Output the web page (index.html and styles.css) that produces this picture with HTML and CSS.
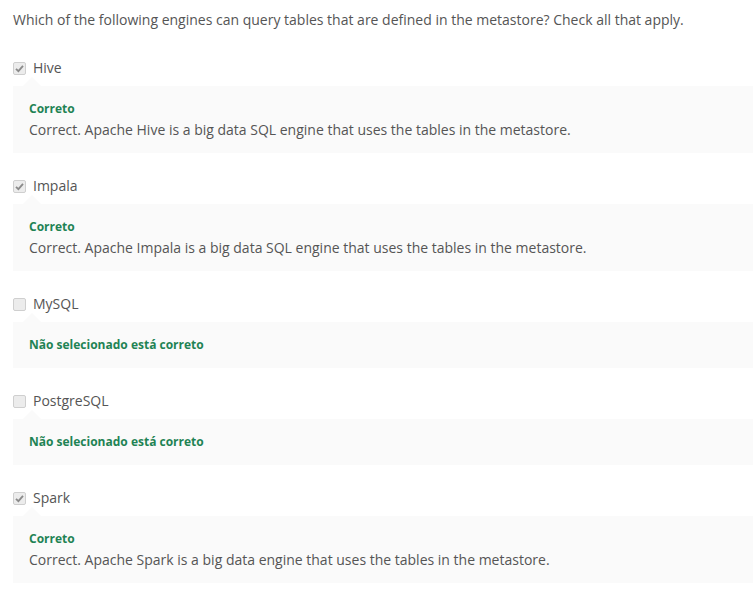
FILE: index.html
```html
<!DOCTYPE html>
<html>
<head>
<meta charset="utf-8">
<link rel="stylesheet" href="styles.css">
</head>
<body>
<div class="quiz">
  <p class="question">Which of the following engines can query tables that are defined in the metastore? Check all that apply.</p>
  <div class="options">
    <div class="option">
      <div class="choice"><span class="box checked"><svg viewBox="0 0 13 13" width="13" height="13"><path d="M3 6.8 L5.4 9.2 L10 3.8" fill="none" stroke="#8a8a8a" stroke-width="1.8"/></svg></span><span class="label">Hive</span></div>
      <div class="feedback">
        <div class="verdict">Correto</div>
        <div class="explain">Correct. Apache Hive is a big data SQL engine that uses the tables in the metastore.</div>
      </div>
    </div>
    <div class="option">
      <div class="choice"><span class="box checked"><svg viewBox="0 0 13 13" width="13" height="13"><path d="M3 6.8 L5.4 9.2 L10 3.8" fill="none" stroke="#8a8a8a" stroke-width="1.8"/></svg></span><span class="label">Impala</span></div>
      <div class="feedback">
        <div class="verdict">Correto</div>
        <div class="explain">Correct. Apache Impala is a big data SQL engine that uses the tables in the metastore.</div>
      </div>
    </div>
    <div class="option">
      <div class="choice"><span class="box"></span><span class="label">MySQL</span></div>
      <div class="feedback short">
        <div class="verdict">Não selecionado está correto</div>
      </div>
    </div>
    <div class="option">
      <div class="choice"><span class="box"></span><span class="label">PostgreSQL</span></div>
      <div class="feedback short">
        <div class="verdict">Não selecionado está correto</div>
      </div>
    </div>
    <div class="option">
      <div class="choice"><span class="box checked"><svg viewBox="0 0 13 13" width="13" height="13"><path d="M3 6.8 L5.4 9.2 L10 3.8" fill="none" stroke="#8a8a8a" stroke-width="1.8"/></svg></span><span class="label">Spark</span></div>
      <div class="feedback">
        <div class="verdict">Correto</div>
        <div class="explain">Correct. Apache Spark is a big data engine that uses the tables in the metastore.</div>
      </div>
    </div>
  </div>
</div>
</body>
</html>
```
FILE: styles.css
```css
html, body {
  margin: 0;
  padding: 0;
  background: #ffffff;
}
body {
  font-family: "Open Sans", "Liberation Sans", sans-serif;
  color: #555555;
  font-size: 14px;
}
.quiz {
  padding: 10px 0 0 13px;
}
.question {
  margin: 0;
  line-height: 20px;
  font-size: 14px;
}
.options {
  display: flex;
  flex-direction: column;
  gap: 23px;
  margin-top: 28px;
}
.choice {
  display: flex;
  align-items: center;
  height: 20px;
}
.box {
  width: 13px;
  height: 13px;
  box-sizing: border-box;
  border: 1px solid #cfcfcf;
  border-radius: 2px;
  background: #ececec;
  display: flex;
  align-items: center;
  justify-content: center;
  margin-right: 7px;
}
.box svg {
  display: block;
  flex: none;
  margin: -1px;
}
.label {
  line-height: 20px;
  color: #555555;
}
.feedback {
  position: relative;
  margin-top: 8px;
  background: #fafafa;
  padding: 13px 16px 13px;
}
.feedback::before {
  content: "";
  position: absolute;
  left: 10px;
  top: -9px;
  border-left: 9px solid transparent;
  border-right: 9px solid transparent;
  border-bottom: 9px solid #fafafa;
}
.verdict {
  font-size: 12px;
  font-weight: 700;
  color: #1f8354;
  line-height: 20px;
}
.explain {
  line-height: 21px;
  color: #555555;
}
```
